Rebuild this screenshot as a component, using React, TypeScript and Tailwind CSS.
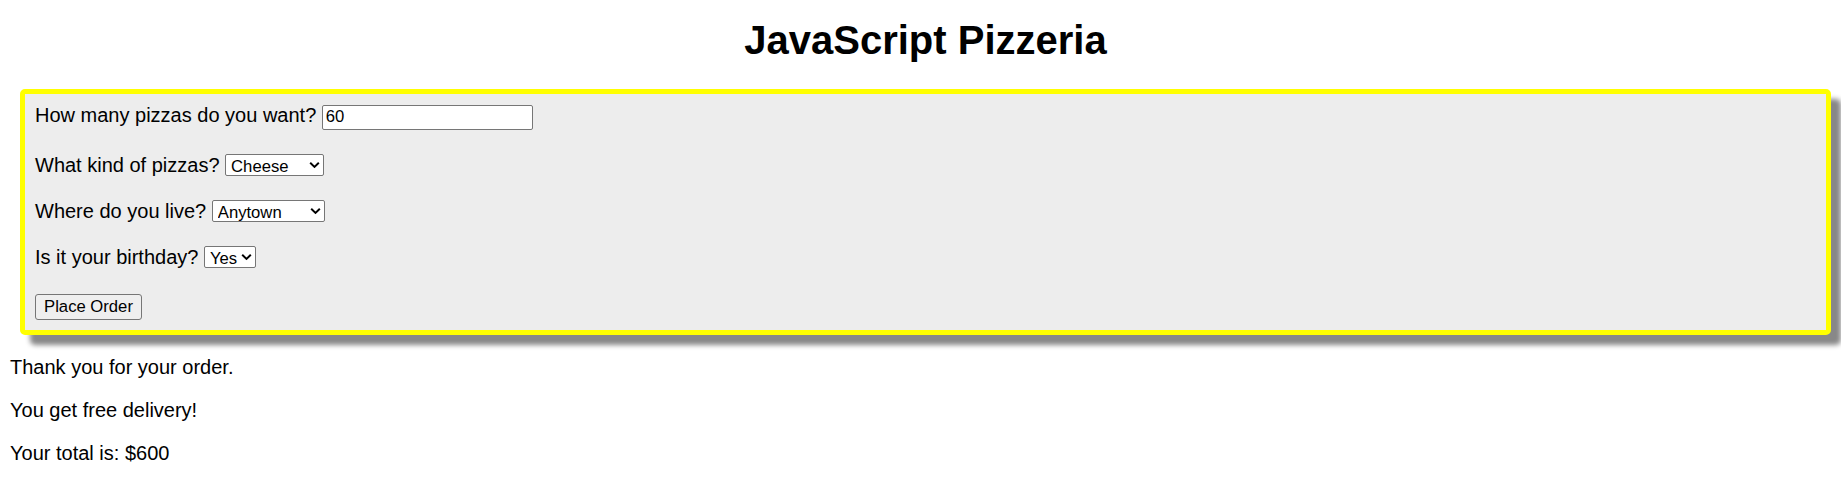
import React from 'react'

function Chevron() {
  return (
    <svg
      width="11"
      height="7"
      viewBox="0 0 11 7"
      className="pointer-events-none absolute right-[4px] top-1/2 -translate-y-1/2"
    >
      <path d="M1.2 1.3 L5.5 5.4 L9.8 1.3" fill="none" stroke="#000" strokeWidth="2" />
    </svg>
  )
}

function Picker({ width, value, options }: { width: string; value: string; options: string[] }) {
  return (
    <span className="relative inline-block align-baseline">
      <select
        defaultValue={value}
        className={`${width} h-[22px] pl-[5px] appearance-none border border-[#767676] rounded-[2px] bg-white text-[16.67px] align-baseline`}
      >
        {options.map((o) => (
          <option key={o}>{o}</option>
        ))}
      </select>
      <Chevron />
    </span>
  )
}

export default function App() {
  return (
    <div className="px-[10px] text-black text-[20px] leading-[23px] font-['Liberation_Sans',Arial,sans-serif]">
      {/* title */}
      <h1 className="mt-[17px] mb-[26px] pl-[10px] text-center text-[40px] leading-[46px] font-bold">
        JavaScript Pizzeria
      </h1>

      {/* order form */}
      <div className="ml-[10px] border-[5px] border-[#ffff00] rounded-[5px] bg-[#ededed] shadow-[10px_10px_5px_#888888] p-[10px]">
        <div>
          How many pizzas do you want?{' '}
          <input
            type="text"
            defaultValue="60"
            className="w-[211px] h-[25px] px-[3px] border border-[#767676] rounded-[2px] bg-white text-[16.67px] align-baseline"
          />
        </div>
        <div className="h-[24px]" />
        <div>
          What kind of pizzas? <Picker width="w-[99px]" value="Cheese" options={['Cheese', 'Pepperoni', 'Veggie']} />
        </div>
        <div className="h-[23px]" />
        <div>
          Where do you live? <Picker width="w-[113px]" value="Anytown" options={['Anytown', 'Elsewhere']} />
        </div>
        <div className="h-[23px]" />
        <div>
          Is it your birthday? <Picker width="w-[52px]" value="Yes" options={['Yes', 'No']} />
        </div>
        <div className="h-[25px]" />
        <div>
          <button className="w-[107px] h-[26px] border border-[#767676] rounded-[3px] bg-[#efefef] text-[16.67px] align-baseline">
            Place Order
          </button>
        </div>
      </div>

      {/* result */}
      <p className="mt-[21px]">Thank you for your order.</p>
      <p className="mt-[20px]">You get free delivery!</p>
      <p className="mt-[20px]">Your total is: $600</p>
    </div>
  )
}
